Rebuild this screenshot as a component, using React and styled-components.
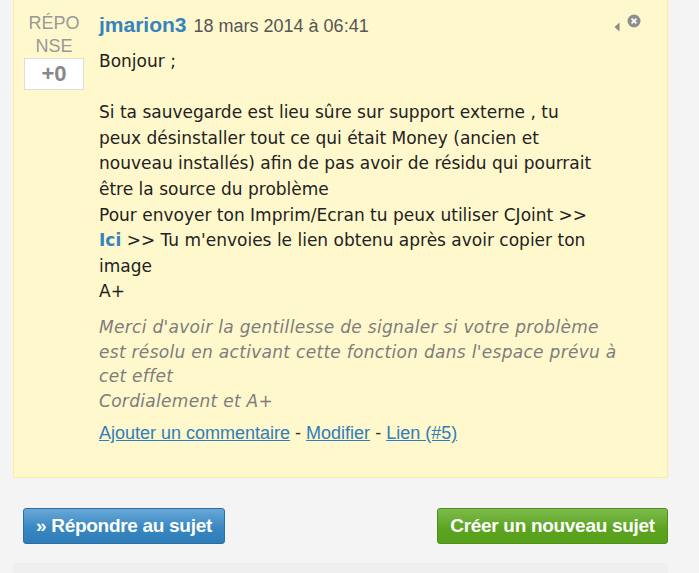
import React from "react";
import styled, { createGlobalStyle } from "styled-components";

const Global = createGlobalStyle`
  html, body {
    margin: 0;
    padding: 0;
    background: #f4f4f4;
  }
  body {
    font-family: "Liberation Sans", Arial, sans-serif;
  }
`;

const Page = styled.div`
  width: 699px;
  height: 573px;
  overflow: hidden;
  background: #f4f4f4;
`;

const Card = styled.div`
  margin-left: 13px;
  width: 643px;
  background: #fff8cc;
  border: 1px solid #fcee9e;
  border-top: none;
  display: flex;
  padding: 12px 0 0 10px;
  box-sizing: content-box;
  height: 465px;
  position: relative;
`;

const Side = styled.div`
  width: 60px;
  display: flex;
  flex-direction: column;
  align-items: center;
`;

const Label = styled.div`
  color: #999;
  font-size: 18px;
  line-height: 23px;
  text-align: center;
  width: 60px;
  word-break: break-all;
`;

const Score = styled.div`
  width: 58px;
  height: 30px;
  background: #fff;
  border: 1px solid #ddd;
  color: #888;
  font-weight: bold;
  font-size: 22px;
  display: flex;
  align-items: center;
  justify-content: center;
`;

const Main = styled.div`
  width: 502px;
  margin-left: 15px;
  padding-top: 1px;
`;

const Header = styled.div`
  display: flex;
  align-items: baseline;
  gap: 7px;
  height: 26px;
`;

const Author = styled.a`
  color: #3684bd;
  font-weight: bold;
  font-size: 21px;
  text-decoration: none;
`;

const Date = styled.span`
  color: #555;
  font-size: 18px;
`;

const Tools = styled.div`
  position: absolute;
  top: 14px;
  right: 26px;
  display: flex;
  align-items: flex-start;
  gap: 7px;
`;

const Body = styled.div`
  font-family: "DejaVu Sans", Verdana, sans-serif;
  font-size: 17px;
  line-height: 25.6px;
  color: #222;
  margin-top: 10px;
`;

const Para = styled.p`
  margin: 0 0 25.6px;
`;

const Strong = styled.a`
  color: #3684bd;
  font-weight: bold;
  text-decoration: none;
`;

const Sign = styled.div`
  width: 524px;
  font-family: "DejaVu Sans", Verdana, sans-serif;
  font-style: italic;
  font-size: 17px;
  line-height: 24.6px;
  letter-spacing: 0.3px;
  color: #7d7d7d;
  margin-top: 10px;
`;

const Links = styled.div`
  margin-top: 10px;
  font-size: 18px;
  color: #333;
`;

const Link = styled.a`
  color: #2f7dba;
  text-decoration: underline;
`;

const Actions = styled.div`
  display: flex;
  justify-content: space-between;
  margin: 30px 31px 0 23px;
`;

const Button = styled.a`
  display: flex;
  align-items: center;
  justify-content: center;
  box-sizing: border-box;
  height: 36px;
  width: ${(p) => p.w}px;
  border-radius: 3px;
  color: #fff;
  font-weight: bold;
  font-size: 19px;
  letter-spacing: -0.3px;
  text-decoration: none;
  background: ${(p) =>
    p.green
      ? "linear-gradient(#7dbb4c, #5ba31f 60%, #58a11b)"
      : "linear-gradient(#68a8d8, #3a88c2 55%, #2e7cb8)"};
  border: 1px solid ${(p) => (p.green ? "#4d8d18" : "#2a6ea3")};
`;

const Footer = styled.div`
  margin: 19px 31px 0 13px;
  height: 20px;
  background: #efefef;
`;

export default function App() {
  return (
    <Page>
      <Global />
      <Card>
        <Side>
          <Label>RÉPONSE</Label>
          <Score>+0</Score>
        </Side>
        <Main>
          <Header>
            <Author>jmarion3</Author>
            <Date>18 mars 2014 à 06:41</Date>
          </Header>
          <Body>
            <Para>Bonjour ;</Para>
            Si ta sauvegarde est lieu sûre sur support externe , tu peux
            désinstaller tout ce qui était Money (ancien et nouveau installés)
            afin de pas avoir de résidu qui pourrait être la source du problème
            <br />
            Pour envoyer ton Imprim/Ecran tu peux utiliser CJoint &gt;&gt;{" "}
            <Strong>Ici</Strong> &gt;&gt; Tu m'envoies le lien obtenu après
            avoir copier ton image
            <br />
            A+
          </Body>
          <Sign>
            Merci d'avoir la gentillesse de signaler si votre problème est
            résolu en activant cette fonction dans l'espace prévu à cet effet
            <br />
            Cordialement et A+
          </Sign>
          <Links>
            <Link>Ajouter un commentaire</Link> - <Link>Modifier</Link> -{" "}
            <Link>Lien (#5)</Link>
          </Links>
        </Main>
        <Tools>
          <svg width="6" height="10" viewBox="0 0 6 10" style={{ marginTop: 8 }}>
            <path d="M5.5 0.5 L0.5 5 L5.5 9.5 Z" fill="#8a8a8a" />
          </svg>
          <svg width="14" height="14" viewBox="0 0 14 14">
            <circle cx="7" cy="7" r="6.5" fill="#8f8f8f" />
            <path d="M4.6 4.6 L9.4 9.4 M9.4 4.6 L4.6 9.4" stroke="#fff" strokeWidth="1.8" />
          </svg>
        </Tools>
      </Card>
      <Actions>
        <Button w={202}>» Répondre au sujet</Button>
        <Button w={231} green>
          Créer un nouveau sujet
        </Button>
      </Actions>
      <Footer />
    </Page>
  );
}
